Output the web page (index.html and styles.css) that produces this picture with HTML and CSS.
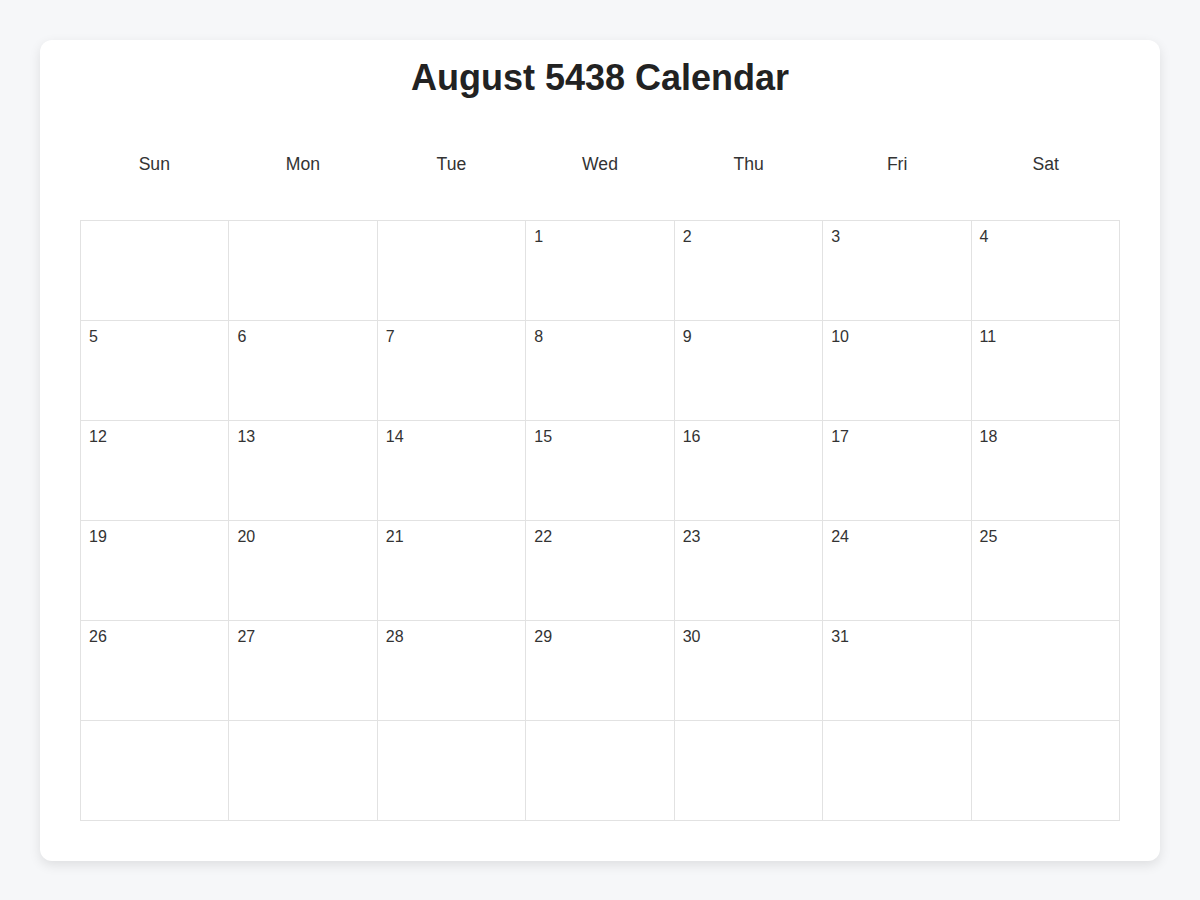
FILE: index.html
```html
<!DOCTYPE html>
<html lang="en">
<head>
<meta charset="utf-8">
<title>August 5438 Calendar</title>
<link rel="stylesheet" href="styles.css">
</head>
<body>
<main class="card">
  <h1 class="title">August 5438 Calendar</h1>
  <div class="weekdays">
    <div class="weekday">Sun</div>
    <div class="weekday">Mon</div>
    <div class="weekday">Tue</div>
    <div class="weekday">Wed</div>
    <div class="weekday">Thu</div>
    <div class="weekday">Fri</div>
    <div class="weekday">Sat</div>
  </div>
  <div class="grid">
    <div class="cell"></div><div class="cell"></div><div class="cell"></div>
    <div class="cell">1</div><div class="cell">2</div><div class="cell">3</div><div class="cell">4</div>
    <div class="cell">5</div><div class="cell">6</div><div class="cell">7</div><div class="cell">8</div><div class="cell">9</div><div class="cell">10</div><div class="cell">11</div>
    <div class="cell">12</div><div class="cell">13</div><div class="cell">14</div><div class="cell">15</div><div class="cell">16</div><div class="cell">17</div><div class="cell">18</div>
    <div class="cell">19</div><div class="cell">20</div><div class="cell">21</div><div class="cell">22</div><div class="cell">23</div><div class="cell">24</div><div class="cell">25</div>
    <div class="cell">26</div><div class="cell">27</div><div class="cell">28</div><div class="cell">29</div><div class="cell">30</div><div class="cell">31</div><div class="cell"></div>
    <div class="cell"></div><div class="cell"></div><div class="cell"></div><div class="cell"></div><div class="cell"></div><div class="cell"></div><div class="cell"></div>
  </div>
</main>
</body>
</html>
```
FILE: styles.css
```css
html, body {
  margin: 0;
  padding: 0;
}
body {
  background: #f6f7f9;
  font-family: "Liberation Sans", Arial, sans-serif;
  color: #333;
  padding: 40px;
}
.card {
  background: #fff;
  border-radius: 12px;
  box-shadow: 0 4px 12px rgba(0, 0, 0, 0.1);
  padding: 17px 40px 40px;
}
.title {
  margin: 0;
  font-size: 36px;
  line-height: 41.4px;
  font-weight: bold;
  text-align: center;
  color: #222;
}
.weekdays {
  display: grid;
  grid-template-columns: repeat(7, 1fr);
  margin: 56px 0 45.5px;
}
.weekday {
  text-align: center;
  font-size: 17.6px;
  line-height: 20px;
  color: #333;
}
.grid {
  display: grid;
  grid-template-columns: repeat(7, 1fr);
  grid-auto-rows: 100px;
  border-top: 1px solid #e2e2e2;
  border-left: 1px solid #e2e2e2;
}
.cell {
  border-right: 1px solid #e2e2e2;
  border-bottom: 1px solid #e2e2e2;
  padding: 7px 8px;
  font-size: 16px;
  line-height: 18px;
  color: #333;
}
```
